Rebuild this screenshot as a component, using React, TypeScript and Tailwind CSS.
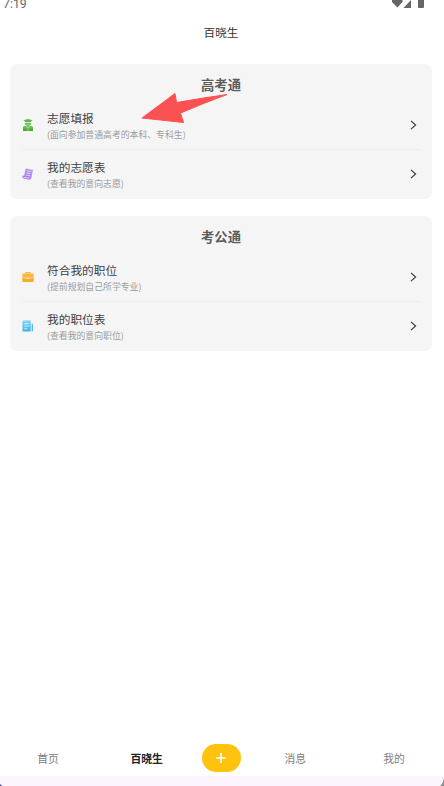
import type { ReactNode } from 'react'

type Item = { title: string; hint: string; icon: ReactNode }

function GraduateIcon() {
  return (
    <svg width="12" height="14" viewBox="0 0 12 14">
      <defs>
        <linearGradient id="grad-green" x1="0" y1="0" x2="0" y2="1">
          <stop offset="0" stopColor="#72c857" />
          <stop offset="1" stopColor="#46a12c" />
        </linearGradient>
      </defs>
      <path d="M1.300 2.200 6 .9l4.700 1.300-1.500.8v1.300H2.800V3z" fill="#62b94a" />
      <path d="M2.800 4.900h6.400v.6a3.200 2.400 0 0 1-6.400 0z" fill="#7cc765" />
      <path d="M1 13V9.400Q1 8.100 2.600 8.100h6.800Q11 8.100 11 9.400V13z" fill="url(#grad-green)" />
      <path d="m4.400 8.300 1.300 1.900M7.600 8.300 6.300 10.200M6 10.400V13" stroke="#d9f2cf" strokeWidth=".6" />
    </svg>
  )
}

function ScrollIcon() {
  return (
    <svg width="13" height="14" viewBox="0 0 13 14">
      <defs>
        <linearGradient id="grad-purple" x1="1" y1="0" x2="0" y2="1">
          <stop offset="0" stopColor="#c39bf2" />
          <stop offset="1" stopColor="#a176ea" />
        </linearGradient>
      </defs>
      <path d="M4 1 12.500 2.600Q11.700 3.300 11.500 4.500L10 11.600Q9.500 13.400 7.500 13.200L2 11.900Q.100 11.300.300 8.600L2.400 9z" fill="url(#grad-purple)" />
      <path d="m5.300 3.500 4.300.9M4.800 5.800l4.300.9M4.300 8.100l4.300.9M1.600 10.400l5.700 1.200" stroke="#f1e6ff" strokeWidth=".8" />
    </svg>
  )
}

function BriefcaseIcon() {
  return (
    <svg width="12" height="12" viewBox="0 0 12 12">
      <path d="M3.800 3V1.500h4.400V3" fill="none" stroke="#efb04d" strokeWidth="1" />
      <rect x=".3" y="2.500" width="11.400" height="4.400" rx=".9" fill="#fbb73e" />
      <path d="M.3 6.700q5.700 1.400 11.400 0v3.400q0 .9-.9.900H1.200q-.9 0-.9-.9z" fill="#fba927" />
      <path d="M.3 6.500q5.700 1.400 11.400 0" stroke="#ffe0a0" strokeWidth=".5" fill="none" />
      <rect x="5.200" y="6.500" width="1.600" height="1.400" rx=".4" fill="#fff2d2" />
    </svg>
  )
}

function DocumentIcon() {
  return (
    <svg width="12" height="12" viewBox="0 0 12 12">
      <defs>
        <linearGradient id="grad-blue" x1="0" y1="0" x2="0" y2="1">
          <stop offset="0" stopColor="#7ad5f8" />
          <stop offset="1" stopColor="#3eb3ef" />
        </linearGradient>
      </defs>
      <path d="M1.300.500h7.400v11H1.300q-.8 0-.8-.8V1.300q0-.8.8-.8z" fill="url(#grad-blue)" />
      <path d="M9.600 3.500h.6q.8 0 .8.800v6.400q0 .8-.8.800h-.6z" fill="#52bff2" />
      <path d="M2.200 3.700h4.500M2.200 6.100h4.500M2.200 8.700h3" stroke="#eafaff" strokeWidth=".8" />
    </svg>
  )
}

const gaokao: Item[] = [
  { title: '志愿填报', hint: '(面向参加普通高考的本科、专科生)', icon: <GraduateIcon /> },
  { title: '我的志愿表', hint: '(查看我的意向志愿)', icon: <ScrollIcon /> },
]

const kaogong: Item[] = [
  { title: '符合我的职位', hint: '(提前规划自己所学专业)', icon: <BriefcaseIcon /> },
  { title: '我的职位表', hint: '(查看我的意向职位)', icon: <DocumentIcon /> },
]

function Section({ title, items }: { title: string; items: Item[] }) {
  return (
    <section className="h-[134.5px] rounded-[7px] bg-[#f5f5f5]">
      <h2 className="flex h-[37px] items-end justify-center pb-[6px] text-[13.3px] leading-5 font-bold text-[#5c5c5c]">
        {title}
      </h2>
      <ul className="divide-y divide-[#ededed] pr-[11px] pl-3">
        {items.map((item) => (
          <li key={item.title} className="flex h-[49px] items-center last:h-12">
            <span className="flex w-3 shrink-0 justify-center">{item.icon}</span>
            <div className="ml-[13px] flex-1 pt-[3px] whitespace-nowrap">
              <p className="text-[11.7px] leading-[16px] text-[#404040]">{item.title}</p>
              <p className="text-[8.85px] leading-[17px] text-[#9c9c9c]">{item.hint}</p>
            </div>
            <svg className="mr-[4px] shrink-0" width="7" height="10" viewBox="0 0 7 10">
              <path d="m1 .800 4.600 4.200L1 9.200" fill="none" stroke="#333" strokeWidth="1.100" />
            </svg>
          </li>
        ))}
      </ul>
    </section>
  )
}

function Tab({ label, active }: { label: string; active?: boolean }) {
  return (
    <button
      className={
        active
          ? 'w-[98.7px] shrink-0 text-center text-[10.8px] font-bold text-[#222]'
          : 'w-[98.7px] shrink-0 text-center text-[10.8px] text-[#808080]'
      }
    >
      {label}
    </button>
  )
}

export default function App() {
  return (
    <div className="relative flex h-[786px] w-[444px] flex-col overflow-hidden bg-white font-['Noto_Sans_CJK_SC',sans-serif]">
      <div className="flex h-2 items-start justify-between pr-[20px] pl-[3px]">
        <span className="font-[Roboto,sans-serif] text-[12.3px] leading-[9px] text-[#666]">7:19</span>
        <svg width="33" height="8" viewBox="0 0 33 8" fill="#666">
          <path d="M1 0h10.500v2L6.500 7.500 1 2zM20 0v8H12.500zM27 0h6v7q0 1-1 1h-4q-1 0-1-1z" />
        </svg>
      </div>
      <header className="flex h-14 items-center justify-center pr-[2px] pb-[7px] text-[11.6px] text-[#333]">
        百晓生
      </header>

      <main className="flex flex-1 flex-col gap-[17.5px] pr-3 pl-2.5">
        <Section title="高考通" items={gaokao} />
        <Section title="考公通" items={kaogong} />
      </main>

      <nav className="flex h-9 items-center justify-center pr-[2px]">
        <Tab label="首页" />
        <Tab label="百晓生" active />
        <div className="flex w-[50px] shrink-0 justify-center">
          <button className="flex h-7 w-[39px] items-center justify-center rounded-full bg-[#ffc30d]">
            <svg width="10" height="10" viewBox="0 0 10 10">
              <path d="M5 0v10M0 5h10" stroke="#fff" strokeWidth="1.700" />
            </svg>
          </button>
        </div>
        <Tab label="消息" />
        <Tab label="我的" />
      </nav>
      <div className="h-2.5 bg-[#fcf5ff]" />

      {/* pointer to the first entry */}
      <svg className="absolute top-[90px] left-[139px]" width="92" height="36" viewBox="0 0 92 36">
        <path d="M3 28 36 3.500 37.500 12.500Q63 8 88 4.500 65 13 41.500 23L44.500 32.500z" fill="#fa5252" stroke="#fa5252" strokeLinejoin="round" />
      </svg>
      {/* rounded device corners */}
      <svg className="absolute bottom-0 left-0" width="3" height="3" viewBox="0 0 3 3">
        <path d="M0 .5Q.5 2.500 2.500 3H0z" fill="#3b3f86" />
      </svg>
      <svg className="absolute right-0 bottom-0" width="4" height="10" viewBox="0 0 4 10">
        <path d="M4 0Q4 7 0 10h4z" fill="#8c8c8c" />
      </svg>
    </div>
  )
}
